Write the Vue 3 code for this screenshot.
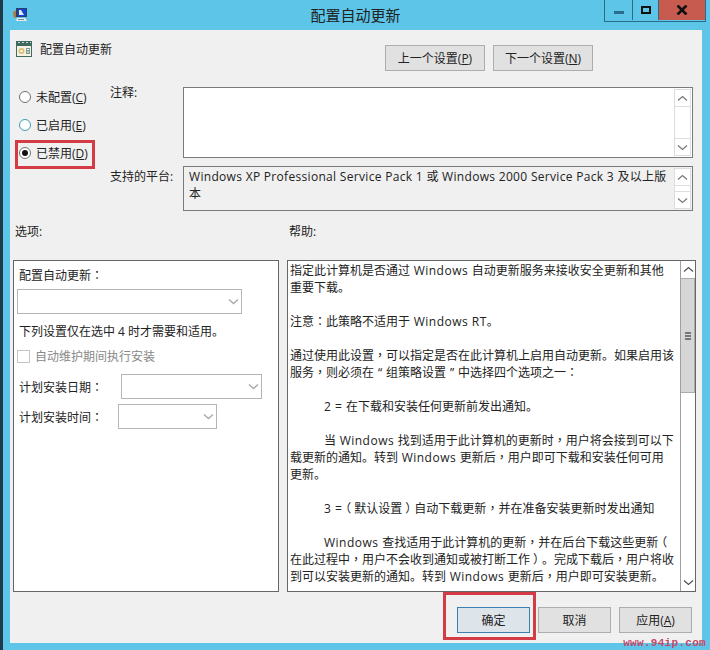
<template>
  <div class="window">
    <div class="titlebar">
      <svg class="app-icon" width="16" height="16" viewBox="0 0 16 16">
        <path d="M0 5l4-2v7l-3 1z" fill="#b07a3c" />
        <rect x="3" y="1" width="11" height="9" fill="#2b3f6e" />
        <rect x="5" y="2" width="8" height="7" fill="#1646c8" />
        <path d="M6 8V3h2l3 5z" fill="#dfe9f7" />
        <path d="M4 11h8l2 3H3z" fill="#e6eaee" />
        <rect x="5" y="12" width="6" height="1" fill="#7d8794" />
      </svg>
      <span class="title">配置自动更新</span>
      <div class="controls">
        <div class="ctl ctl-min"><span class="min-bar"></span></div>
        <div class="ctl ctl-max"><span class="max-box"></span></div>
        <div class="ctl ctl-close">
          <svg width="12" height="10" viewBox="0 0 12 10"><path d="M1.5 0.5L10.5 9.5M10.5 0.5L1.5 9.5" stroke="#111" stroke-width="2.6" /></svg>
        </div>
      </div>
    </div>

    <div class="client">
      <div class="head">
        <div class="head-name">
          <svg width="16" height="16" viewBox="0 0 16 16">
            <rect width="16" height="16" fill="#3f6a60" />
            <path d="M2 1.5h2M6 1.5h2M10 1.5h2M14 1.5h1" stroke="#c9d6c8" stroke-width="1" />
            <rect x="1" y="5" width="14" height="10" fill="#f6f3e6" />
            <circle cx="5.5" cy="10" r="3" fill="#dcbf6a" />
            <circle cx="5.5" cy="10" r="1.2" fill="#fff" />
            <rect x="10" y="7" width="4" height="6" fill="#7f9a8e" />
            <rect x="11" y="8" width="2" height="1" fill="#fff" />
            <rect x="11" y="10.5" width="2" height="1" fill="#fff" />
          </svg>
          <span>配置自动更新</span>
        </div>
        <div class="nav">
          <button class="btn nav-btn">上一个设置(<u>P</u>)</button>
          <button class="btn nav-btn">下一个设置(<u>N</u>)</button>
        </div>
      </div>

      <div class="top">
        <div class="radios">
          <label class="radio" v-for="r in radios" :key="r.label">
            <span class="dot" :class="{ on: r.on, blue: r.blue }"></span>
            <span>{{ r.label }}(<u>{{ r.key }}</u>)</span>
          </label>
          <div class="mark mark-radio"></div>
        </div>
        <div class="fields">
          <div class="field-row note-row">
            <span class="field-label">注释:</span>
            <div class="box note">
              <div class="mini-scroll">
                <span class="arrow"><svg width="11" height="7" viewBox="0 0 11 7"><path d="M1 5.5L5.5 1.5L10 5.5" fill="none" stroke="#777" stroke-width="1.2" /></svg></span>
                <span class="arrow"><svg width="11" height="7" viewBox="0 0 11 7"><path d="M1 1.5L5.5 5.5L10 1.5" fill="none" stroke="#777" stroke-width="1.2" /></svg></span>
              </div>
            </div>
          </div>
          <div class="field-row platform-row">
            <span class="field-label">支持的平台:</span>
            <div class="box platform">
              <div class="platform-text">Windows XP Professional Service Pack 1 或 Windows 2000 Service Pack 3 及以上版本</div>
              <div class="mini-scroll">
                <span class="arrow"><svg width="11" height="7" viewBox="0 0 11 7"><path d="M1 5.5L5.5 1.5L10 5.5" fill="none" stroke="#777" stroke-width="1.2" /></svg></span>
                <span class="arrow"><svg width="11" height="7" viewBox="0 0 11 7"><path d="M1 1.5L5.5 5.5L10 1.5" fill="none" stroke="#777" stroke-width="1.2" /></svg></span>
              </div>
            </div>
          </div>
        </div>
      </div>

      <div class="section-labels">
        <span class="opt-label">选项:</span>
        <span>帮助:</span>
      </div>

      <div class="panels">
        <div class="options">
          <div class="opt-title">配置自动更新<span class="punct">：</span></div>
          <div class="combo combo-main"><svg width="11" height="7" viewBox="0 0 11 7"><path d="M1 1.5L5.5 5.5L10 1.5" fill="none" stroke="#aaa" stroke-width="1.4" /></svg></div>
          <div class="opt-note">下列设置仅在选中 4 时才需要和适用。</div>
          <div class="check-row"><span class="check"></span><span>自动维护期间执行安装</span></div>
          <div class="sched sched-date">
            <span>计划安装日期<span class="punct">：</span></span>
            <div class="combo combo-date"><svg width="11" height="7" viewBox="0 0 11 7"><path d="M1 1.5L5.5 5.5L10 1.5" fill="none" stroke="#aaa" stroke-width="1.4" /></svg></div>
          </div>
          <div class="sched sched-time">
            <span>计划安装时间<span class="punct">：</span></span>
            <div class="combo combo-time"><svg width="11" height="7" viewBox="0 0 11 7"><path d="M1 1.5L5.5 5.5L10 1.5" fill="none" stroke="#aaa" stroke-width="1.4" /></svg></div>
          </div>
        </div>

        <div class="help">
          <div class="help-text">
            <p v-for="(p, i) in helpLines" :key="i" :class="{ indent: p.indent }">
              <span v-for="(s, j) in splitRuns(p.text)" :key="j" :class="s.kind">{{ s.text }}</span>
            </p>
          </div>
          <div class="help-scroll">
            <span class="sb-arrow"><svg width="11" height="7" viewBox="0 0 11 7"><path d="M1 5.5L5.5 1.5L10 5.5" fill="none" stroke="#555" stroke-width="1.3" /></svg></span>
            <span class="sb-thumb"><i></i><i></i><i></i></span>
            <span class="sb-track"></span>
            <span class="sb-arrow"><svg width="11" height="7" viewBox="0 0 11 7"><path d="M1 1.5L5.5 5.5L10 1.5" fill="none" stroke="#555" stroke-width="1.3" /></svg></span>
          </div>
        </div>
      </div>

      <div class="footer">
        <div class="ok-wrap">
          <button class="btn foot-btn ok">确定</button>
          <div class="mark mark-ok"></div>
        </div>
        <button class="btn foot-btn">取消</button>
        <button class="btn foot-btn">应用(<u>A</u>)</button>
      </div>
    </div>
    <div class="watermark">www.94ip.com</div>
  </div>
</template>

<script setup>
const radios = [
  { label: '未配置', key: 'C' },
  { label: '已启用', key: 'E', blue: true },
  { label: '已禁用', key: 'D', on: true }
]

const helpLines = [
  { text: '指定此计算机是否通过 Windows 自动更新服务来接收安全更新和其他重要下载。' },
  { text: '' },
  { text: '注意：此策略不适用于 Windows RT。' },
  { text: '' },
  { text: '通过使用此设置，可以指定是否在此计算机上启用自动更新。如果启用该服务，则必须在“组策略设置”中选择四个选项之一：' },
  { text: '' },
  { text: '2 = 在下载和安装任何更新前发出通知。', indent: true },
  { text: '' },
  { text: '当 Windows 找到适用于此计算机的更新时，用户将会接到可以下载更新的通知。转到 Windows 更新后，用户即可下载和安装任何可用更新。', indent: true },
  { text: '' },
  { text: '3 =（默认设置）自动下载更新，并在准备安装更新时发出通知', indent: true },
  { text: '' },
  { text: 'Windows 查找适用于此计算机的更新，并在后台下载这些更新（在此过程中，用户不会收到通知或被打断工作）。完成下载后，用户将收到可以安装更新的通知。转到 Windows 更新后，用户即可安装更新。', indent: true }
]

// the reference centres full-width punctuation in its cell and sets latin
// runs a little wider than the CJK text around them
const kindOf = (s) => {
  if (/[，：]/.test(s)) return 'punct'
  if (s === '（') return 'cell open'
  if (s === '）') return 'cell close'
  if (s === '“' || s === '”') return 'cell'
  if (/^[A-Za-z0-9 =]+$/.test(s)) return 'latin'
  return ''
}

const splitRuns = (text) =>
  text.split(/([，：（）“”]|[A-Za-z0-9 =]+)/).filter(Boolean).map((s) => ({ text: s, kind: kindOf(s) }))
</script>

<style>
html, body {
  margin: 0;
  background: #5cc5e8;
}
</style>

<style scoped>
.window {
  width: 710px;
  height: 650px;
  box-sizing: border-box;
  position: relative;
  overflow: hidden;
  background: #5cc5e8;
  border-left: 3px solid #1f3a48;
  padding-right: 8px;
  display: flex;
  flex-direction: column;
  font-family: "Open Sans", "Noto Sans CJK SC", sans-serif;
  font-size: 12px;
  color: #222;
}

.punct {
  font-family: "Noto Sans CJK TC", sans-serif;
  line-height: 0;
}

.latin {
  letter-spacing: 0.5px;
}

.cell {
  display: inline-block;
  width: 12px;
  text-align: center;
  text-indent: 0;
  line-height: 0;
}

.cell.open {
  text-align: left;
  transform: translateX(-3px);
}

.cell.close {
  text-align: left;
  transform: translateX(3px);
}

.titlebar {
  height: 30px;
  flex: none;
  display: flex;
  align-items: flex-start;
  position: relative;
}

.app-icon {
  margin: 7px 0 0 10px;
}

.title {
  position: absolute;
  left: 6px;
  right: 0;
  top: 6px;
  text-align: center;
  font-size: 15px;
  line-height: 18px;
  color: #222;
}

.controls {
  position: absolute;
  top: 0;
  right: -4px;
  display: flex;
  height: 21px;
  border: 1px solid #2a6d8a;
  border-top: none;
}

.ctl {
  display: flex;
  align-items: center;
  justify-content: center;
  height: 20px;
  box-sizing: border-box;
}

.ctl-min {
  width: 28px;
  border-right: 1px solid #2a6d8a;
}

.ctl-max {
  width: 26px;
  border-right: 1px solid #2a6d8a;
}

.ctl-close {
  width: 46px;
  background: #c75b50;
}

.min-bar {
  width: 10px;
  height: 3px;
  margin-top: 4px;
  background: #2a6d8a;
}

.max-box {
  width: 6px;
  height: 4px;
  border: 2px solid #111;
}

.client {
  margin-left: 7px;
  width: 692px;
  height: 613px;
  flex: none;
  box-sizing: border-box;
  background: #f0f0f0;
}

.head {
  display: flex;
  height: 57px;
}

.head-name {
  display: flex;
  align-items: center;
  gap: 8px;
  width: 375px;
  height: 38px;
  padding-left: 6px;
  box-sizing: border-box;
}

.nav {
  display: flex;
  gap: 8px;
  padding-top: 15px;
}

.btn {
  font: inherit;
  color: #222;
  background: #e1e1e1;
  border: 1px solid #adadad;
  padding: 0;
  box-sizing: border-box;
}

.nav-btn {
  width: 100px;
  height: 26px;
}

.top {
  display: flex;
  height: 124px;
}

.radios {
  position: relative;
  width: 100px;
  margin-top: -4px;
  padding-left: 9px;
  box-sizing: border-box;
}

.radio {
  display: flex;
  align-items: center;
  gap: 5px;
  height: 28px;
}

.dot {
  width: 10px;
  height: 10px;
  border: 1px solid #707070;
  border-radius: 50%;
  background: #fff;
  position: relative;
}

.dot.blue {
  border-color: #3c9bb8;
}

.dot.on::after {
  content: "";
  position: absolute;
  left: 2px;
  top: 2px;
  width: 6px;
  height: 6px;
  border-radius: 50%;
  background: #111;
}

.mark {
  position: absolute;
  border: 3px solid #d33c44;
  box-sizing: border-box;
  pointer-events: none;
}

.mark-radio {
  left: 5px;
  top: 57px;
  width: 80px;
  height: 29px;
}

.fields {
  flex: 1;
}

.field-row {
  display: flex;
}

.field-label {
  width: 73px;
  flex: none;
}

.box {
  width: 510px;
  border: 1px solid #7a7a7a;
  box-sizing: border-box;
  display: flex;
  justify-content: flex-end;
  padding: 1px;
}

.note-row {
  height: 79px;
}

.note-row .field-label {
  margin-top: -4px;
}

.note {
  height: 71px;
  background: #fff;
}

.platform-row .field-label {
  padding-top: 1px;
}

.platform {
  height: 45px;
  justify-content: space-between;
}

.platform-text {
  width: 484px;
  padding-left: 4px;
  box-sizing: border-box;
  line-height: 17px;
  letter-spacing: 0.31px;
}

.mini-scroll {
  width: 17px;
  display: flex;
  flex-direction: column;
  justify-content: space-between;
  background: #fff;
  border: 1px solid #ddd;
  box-sizing: border-box;
}

.arrow {
  height: 16px;
  display: flex;
  align-items: center;
  justify-content: center;
  border: 0 solid #ddd;
}

.arrow:first-child {
  border-bottom-width: 1px;
}

.arrow:last-child {
  border-top-width: 1px;
}

.section-labels {
  display: flex;
  padding: 12px 0 20px 5px;
  line-height: 17px;
  height: 17px;
}

.opt-label {
  width: 274px;
}

.panels {
  display: flex;
  gap: 8px;
  padding-left: 3px;
  height: 332px;
}

.options {
  width: 266px;
  height: 332px;
  border: 1px solid #666;
  background: #fff;
  box-sizing: border-box;
  padding: 6px 0 0 3px;
}

.opt-title {
  line-height: 17px;
  padding-left: 2px;
}

.combo {
  height: 25px;
  border: 1px solid #b5b5b5;
  box-sizing: border-box;
  display: flex;
  align-items: center;
  justify-content: flex-end;
  padding-right: 2px;
}

.combo-main {
  width: 225px;
  margin-top: 5px;
}

.combo-date {
  width: 141px;
  margin-left: 18px;
}

.combo-time {
  width: 99px;
  margin-left: 15px;
}

.opt-note {
  margin-top: 9px;
  line-height: 17px;
  padding-left: 2px;
}

.check-row {
  display: flex;
  align-items: center;
  gap: 5px;
  margin-top: 8px;
  color: #888;
  line-height: 17px;
}

.check {
  width: 13px;
  height: 13px;
  border: 1px solid #c4c4c4;
  box-sizing: border-box;
}

.sched {
  display: flex;
  align-items: center;
  padding-left: 2px;
}

.sched-date {
  margin-top: 9px;
}

.sched-time {
  margin-top: 5px;
}

.help {
  width: 409px;
  height: 332px;
  border: 1px solid #666;
  background: #fff;
  box-sizing: border-box;
  display: flex;
}

.help-text {
  width: 392px;
  flex: none;
  padding: 1px 5.5px 0 2px;
  box-sizing: border-box;
  overflow: hidden;
  line-height: 17px;
}

.help-text p {
  margin: 0;
  min-height: 17px;
}

.help-text p.indent {
  text-indent: 34px;
}

.help-scroll {
  flex: 1;
  display: flex;
  flex-direction: column;
  border-left: 1px solid #a0a0a0;
}

.sb-arrow {
  height: 17px;
  flex: none;
  display: flex;
  align-items: center;
  justify-content: center;
}

.sb-thumb {
  height: 115px;
  flex: none;
  background: #d6d6d6;
  border: 1px solid #ababab;
  border-left: none;
  box-sizing: border-box;
  display: flex;
  flex-direction: column;
  align-items: center;
  justify-content: center;
  gap: 1px;
}

.sb-thumb i {
  width: 6px;
  height: 2px;
  background: #777;
}

.sb-track {
  flex: 1;
}

.footer {
  display: flex;
  justify-content: flex-end;
  gap: 8px;
  padding: 15px 10px 0 0;
}

.foot-btn {
  width: 73px;
  height: 26px;
}

.ok-wrap {
  position: relative;
  height: 26px;
}

.ok {
  background: #dde4ea;
  border-color: #3c7fb1;
}

.mark-ok {
  left: -14px;
  top: -15px;
  width: 93px;
  height: 48px;
}

.watermark {
  position: absolute;
  right: 4px;
  bottom: 1px;
  font-family: "Liberation Mono", monospace;
  font-weight: 700;
  font-size: 11px;
  line-height: 12px;
  letter-spacing: 0.3px;
  color: #c2486a;
}
</style>
